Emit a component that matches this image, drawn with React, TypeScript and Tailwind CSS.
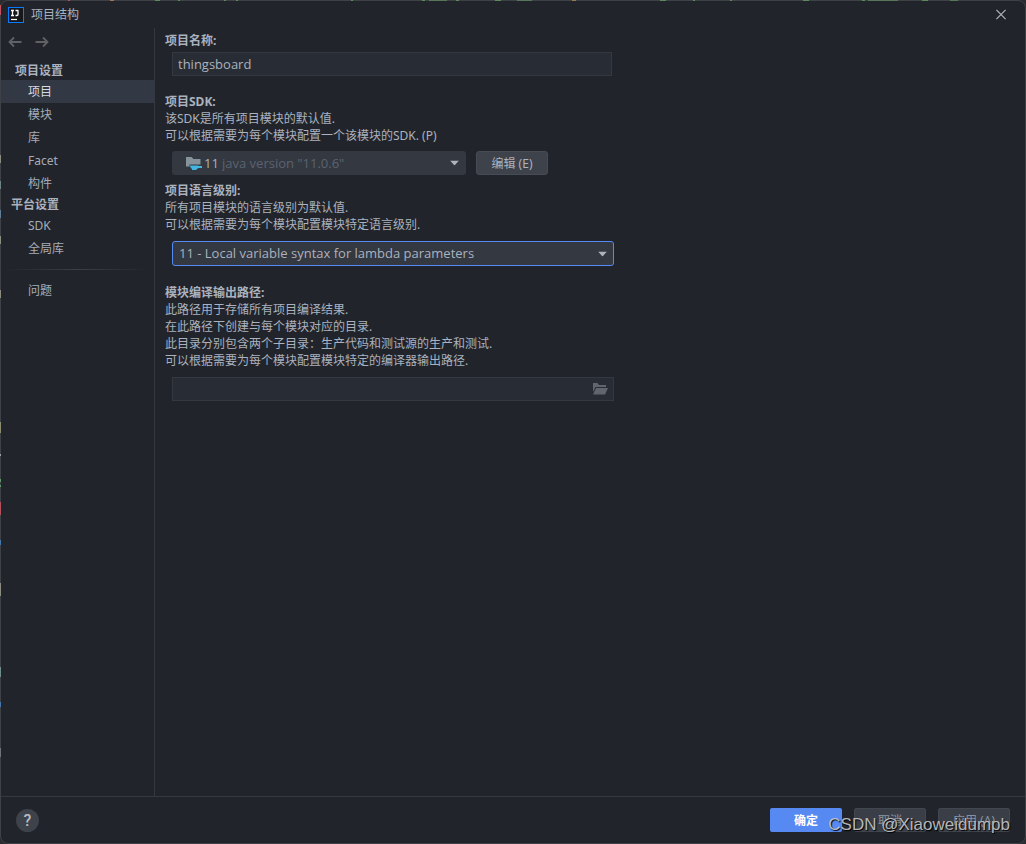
import { useState } from 'react';
import type { ReactNode } from 'react';

const projectItems = ['项目', '模块', '库', 'Facet', '构件'];
const platformItems = ['SDK', '全局库'];

const languageLevels = [
  '11 - Local variable syntax for lambda parameters',
  '10 - Local variable type inference',
  '8 - Lambdas, type annotations etc.',
];

// slivers of the editor window that show around the dialog
const leftSlivers = [
  { y: 5, h: 10, color: '#c4525c' },
  { y: 155, h: 8, color: '#8d8c80' },
  { y: 181, h: 8, color: '#6f8488' },
  { y: 210, h: 8, color: '#5f7f9a' },
  { y: 236, h: 8, color: '#8d8c80' },
  { y: 290, h: 8, color: '#8d8c80' },
  { y: 422, h: 11, color: '#8d8c70' },
  { y: 454, h: 2, color: '#a0a2a4' },
  { y: 479, h: 3, color: '#5f9a68' },
  { y: 485, h: 2, color: '#5f9a68' },
  { y: 502, h: 13, color: '#b5505a' },
  { y: 540, h: 5, color: '#4379b0' },
  { y: 583, h: 13, color: '#8d8c80' },
  { y: 667, h: 10, color: '#6f8d8d' },
  { y: 702, h: 5, color: '#4379b0' },
  { y: 748, h: 9, color: '#6e7478' },
];

const topSlivers = [
  { x: 68, w: 2, color: '#b5505a' },
  { x: 110, w: 4, color: '#957a58' },
  { x: 155, w: 5, color: '#5c8a5c' },
  { x: 178, w: 2, color: '#5c8a5c' },
  { x: 224, w: 2, color: '#5c8a5c' },
  { x: 236, w: 2, color: '#5c8a5c' },
  { x: 351, w: 2, color: '#5c8a5c' },
  { x: 422, w: 3, color: '#5c8a5c' },
  { x: 429, w: 18, color: '#57765a' },
  { x: 456, w: 3, color: '#5c8a5c' },
  { x: 495, w: 6, color: '#5c8a5c' },
  { x: 517, w: 15, color: '#57765a' },
  { x: 572, w: 4, color: '#957a58' },
  { x: 660, w: 6, color: '#5c8a5c' },
  { x: 693, w: 2, color: '#5c8a5c' },
  { x: 730, w: 2, color: '#5c8a5c' },
  { x: 803, w: 6, color: '#5c8a5c' },
  { x: 862, w: 3, color: '#5c8a5c' },
  { x: 868, w: 30, color: '#57765a' },
  { x: 922, w: 6, color: '#5c8a5c' },
  { x: 950, w: 8, color: '#57765a' },
];

function EditorSlivers() {
  return (
    <svg className="pointer-events-none absolute -top-px -left-px h-full w-full overflow-visible" aria-hidden="true">
      {leftSlivers.map(({ y, h, color }) => (
        <rect key={y} x="0" y={y} width="1" height={h} fill={color} />
      ))}
      {topSlivers.map(({ x, w, color }) => (
        <rect key={x} x={x} y="0" width={w} height="1" fill={color} />
      ))}
    </svg>
  );
}

function AppLogo() {
  return (
    <svg className="size-4" viewBox="0 0 16 16" aria-hidden="true">
      <rect width="16" height="16" fill="#087cfa" />
      <rect x="1" y="1" width="14" height="14" fill="#17181c" />
      <path d="M3 3.500h3M4.500 3.500v5M3 8.500h3M7.500 3.500h3M10 3.500v4q0 1-1 1H7.500" fill="none" stroke="#fff" strokeWidth="1.300" />
      <path d="M3 12.500h6" stroke="#fff" strokeWidth="1.200" />
    </svg>
  );
}

function ArrowIcon({ flip = false }: { flip?: boolean }) {
  return (
    <svg className={flip ? 'h-3 w-[14px] rotate-180' : 'h-3 w-[14px]'} viewBox="0 0 14 12" fill="none" stroke="#5f6164" strokeWidth="1.800" aria-hidden="true">
      <path d="M13.500 6H1.500M6 1.500L1.500 6L6 10.500" />
    </svg>
  );
}

function JdkIcon() {
  return (
    <svg className="h-4 w-[17px]" viewBox="0 0 17 16" aria-hidden="true">
      <path d="M1 2h5.500l2 2H15.500v7.500H1z" fill="#87939a" />
      <path d="M4.500 9.500h12.500v3.500h-3.500l-1 2.500H5z" fill="#333841" />
      <path d="M5 10.500h8.500v.5H17v2h-3.800l-.9 1h-.8v1H7v-1Q5 12.700 5 10.500z" fill="#40b6e0" />
    </svg>
  );
}

function FolderIcon() {
  return (
    <svg className="h-3 w-4" viewBox="0 0 16 12" fill="#60666c" aria-hidden="true">
      <path d="M1 0h4.500l1.500 2h7v2H3.500L1 9z" />
      <path d="M4 5h12l-3 6.500H1z" />
    </svg>
  );
}

function Caret() {
  return (
    <svg className="pointer-events-none absolute right-[7px] top-1/2 h-[5px] w-[9px] -translate-y-1/2" viewBox="0 0 9 5" aria-hidden="true">
      <path d="M0 0h9L4.500 5z" fill="#afb4bb" />
    </svg>
  );
}

function NavItem({ name, active, onSelect }: { name: string; active: boolean; onSelect: (name: string) => void }) {
  return (
    <button
      type="button"
      onClick={() => onSelect(name)}
      className={`block h-[23px] w-full pl-[27px] text-left ${active ? 'bg-[#323844] text-[#d7dae0]' : 'text-[#a5acb8]'}`}
    >
      {name}
    </button>
  );
}

function Section({ title, htmlFor, lines = [], children }: { title: string; htmlFor: string; lines?: string[]; children: ReactNode }) {
  return (
    <section>
      <label htmlFor={htmlFor} className="block font-bold">{title}</label>
      {lines.map((line) => (
        <p key={line}>{line}</p>
      ))}
      {children}
    </section>
  );
}

export default function App() {
  const [active, setActive] = useState('项目');
  const [name, setName] = useState('thingsboard');

  return (
    <div className="flex min-h-screen flex-col bg-[#2b2c30] font-['Noto_Sans','Noto_Sans_CJK_SC',sans-serif] text-xs leading-[17px] text-[#abb2bf]">
      <div className="relative flex flex-1 flex-col rounded-lg border border-[#3e4145] bg-[#21252b]">
        <EditorSlivers />
        <header className="flex h-[27px] items-center justify-between pl-[7px] pr-[18px]">
          <div className="flex items-center gap-[7px]">
            <AppLogo />
            <h1>项目结构</h1>
          </div>
          <button type="button" aria-label="关闭">
            <svg className="h-[11px] w-3" viewBox="0 0 12 12" stroke="#b8babd" strokeWidth="1.200" aria-hidden="true">
              <path d="M1 1l10 10M11 1L1 11" />
            </svg>
          </button>
        </header>

        <div className="flex flex-1">
          <nav className="w-[154px] shrink-0 border-r border-[#333841]">
            <div className="mb-[5px] flex h-7 items-center gap-[13px] pl-[7px]">
              <button type="button" aria-label="后退"><ArrowIcon /></button>
              <button type="button" aria-label="前进"><ArrowIcon flip /></button>
            </div>
            <h2 className="h-[19px] pl-[14px] leading-[19px] font-bold">项目设置</h2>
            {projectItems.map((item) => (
              <NavItem key={item} name={item} active={item === active} onSelect={setActive} />
            ))}
            <h2 className="h-[19px] pl-[10px] leading-[19px] font-bold">平台设置</h2>
            {platformItems.map((item) => (
              <NavItem key={item} name={item} active={item === active} onSelect={setActive} />
            ))}
            <hr className="mx-1 my-[9px] h-px border-0 bg-linear-to-r from-transparent via-[#3a3f49] to-transparent" />
            <NavItem name="问题" active={active === '问题'} onSelect={setActive} />
          </nav>

          <main className="min-w-0 flex-1 pl-[10px] pt-1">
            <Section title="项目名称:" htmlFor="project-name">
              <input
                id="project-name"
                value={name}
                onChange={(e) => setName(e.target.value)}
                className="mt-[3px] mb-[17px] ml-[7px] block h-6 w-[440px] border border-[#333841] bg-[#282c34] px-[5px] pb-px font-['Open_Sans',sans-serif] text-[13px] outline-none"
              />
            </Section>

            <Section title="项目SDK:" htmlFor="project-sdk" lines={['该SDK是所有项目模块的默认值.', '可以根据需要为每个模块配置一个该模块的SDK. (P)']}>
              <div className="my-[7px] ml-[7px] flex gap-[10px]">
                <div className="relative w-[294px] font-['Open_Sans',sans-serif] text-[13px]">
                  <div className="pointer-events-none absolute inset-y-0 left-[13px] flex items-center gap-[2px]">
                    <JdkIcon />
                    <span>11</span>
                  </div>
                  <select id="project-sdk" className="block h-6 w-full appearance-none rounded-[3px] bg-[#333841] pl-[50px] text-[#5c6370] outline-none">
                    <option>java version "11.0.6"</option>
                  </select>
                  <Caret />
                </div>
                <button type="button" className="h-6 w-[72px] rounded-[3px] border border-[#464b54] bg-[#3d424b]">编辑 (E)</button>
              </div>
            </Section>

            <Section title="项目语言级别:" htmlFor="language-level" lines={['所有项目模块的语言级别为默认值.', '可以根据需要为每个模块配置模块特定语言级别.']}>
              <div className="relative mt-2 mb-[18px] ml-[7px] w-[442px]">
                <select id="language-level" className="block h-[25px] w-full appearance-none rounded-[3px] border border-[#568af2] bg-[#333841] px-[6px] font-['Open_Sans',sans-serif] text-[13px] outline-none">
                  {languageLevels.map((level) => (
                    <option key={level}>{level}</option>
                  ))}
                </select>
                <Caret />
              </div>
            </Section>

            <Section
              title="模块编译输出路径:"
              htmlFor="output-path"
              lines={[
                '此路径用于存储所有项目编译结果.',
                '在此路径下创建与每个模块对应的目录.',
                '此目录分别包含两个子目录：生产代码和测试源的生产和测试.',
                '可以根据需要为每个模块配置模块特定的编译器输出路径.',
              ]}
            >
              <div className="mt-2 ml-[7px] flex h-6 w-[442px] items-center border border-[#333841] bg-[#282c34] pr-[5px]">
                <input id="output-path" className="min-w-0 flex-1 px-[5px] font-['Open_Sans',sans-serif] text-[13px] outline-none" />
                <button type="button" aria-label="浏览"><FolderIcon /></button>
              </div>
            </Section>
          </main>
        </div>

        <footer className="flex h-[47px] items-center justify-between border-t border-[#333841] px-[15px]">
          <button type="button" aria-label="帮助" className="size-[23px] rounded-full bg-[#3d424b] font-['Roboto',sans-serif] text-base font-medium leading-[23px] text-[#b9bcc1]">?</button>
          <div className="flex gap-3">
            <button type="button" className="h-6 w-[72px] rounded-[2px] bg-[#568af2] font-bold text-white">确定</button>
            <button type="button" className="h-6 w-[72px] rounded-[2px] border border-[#42464e] bg-[#3a3e46] text-[#8a92a0]">取消</button>
            <button type="button" className="h-6 w-[72px] rounded-[2px] border border-[#42464e] bg-[#3a3e46] text-[#8a92a0]">应用 (A)</button>
          </div>
        </footer>
        <span className="pointer-events-none absolute right-[15px] bottom-2 font-['Liberation_Sans',sans-serif] text-[17px] leading-5 text-[#c9cacc]/90 [text-shadow:1px_1px_1px_#000]">
          CSDN @Xiaoweidumpb
        </span>
      </div>
    </div>
  );
}
